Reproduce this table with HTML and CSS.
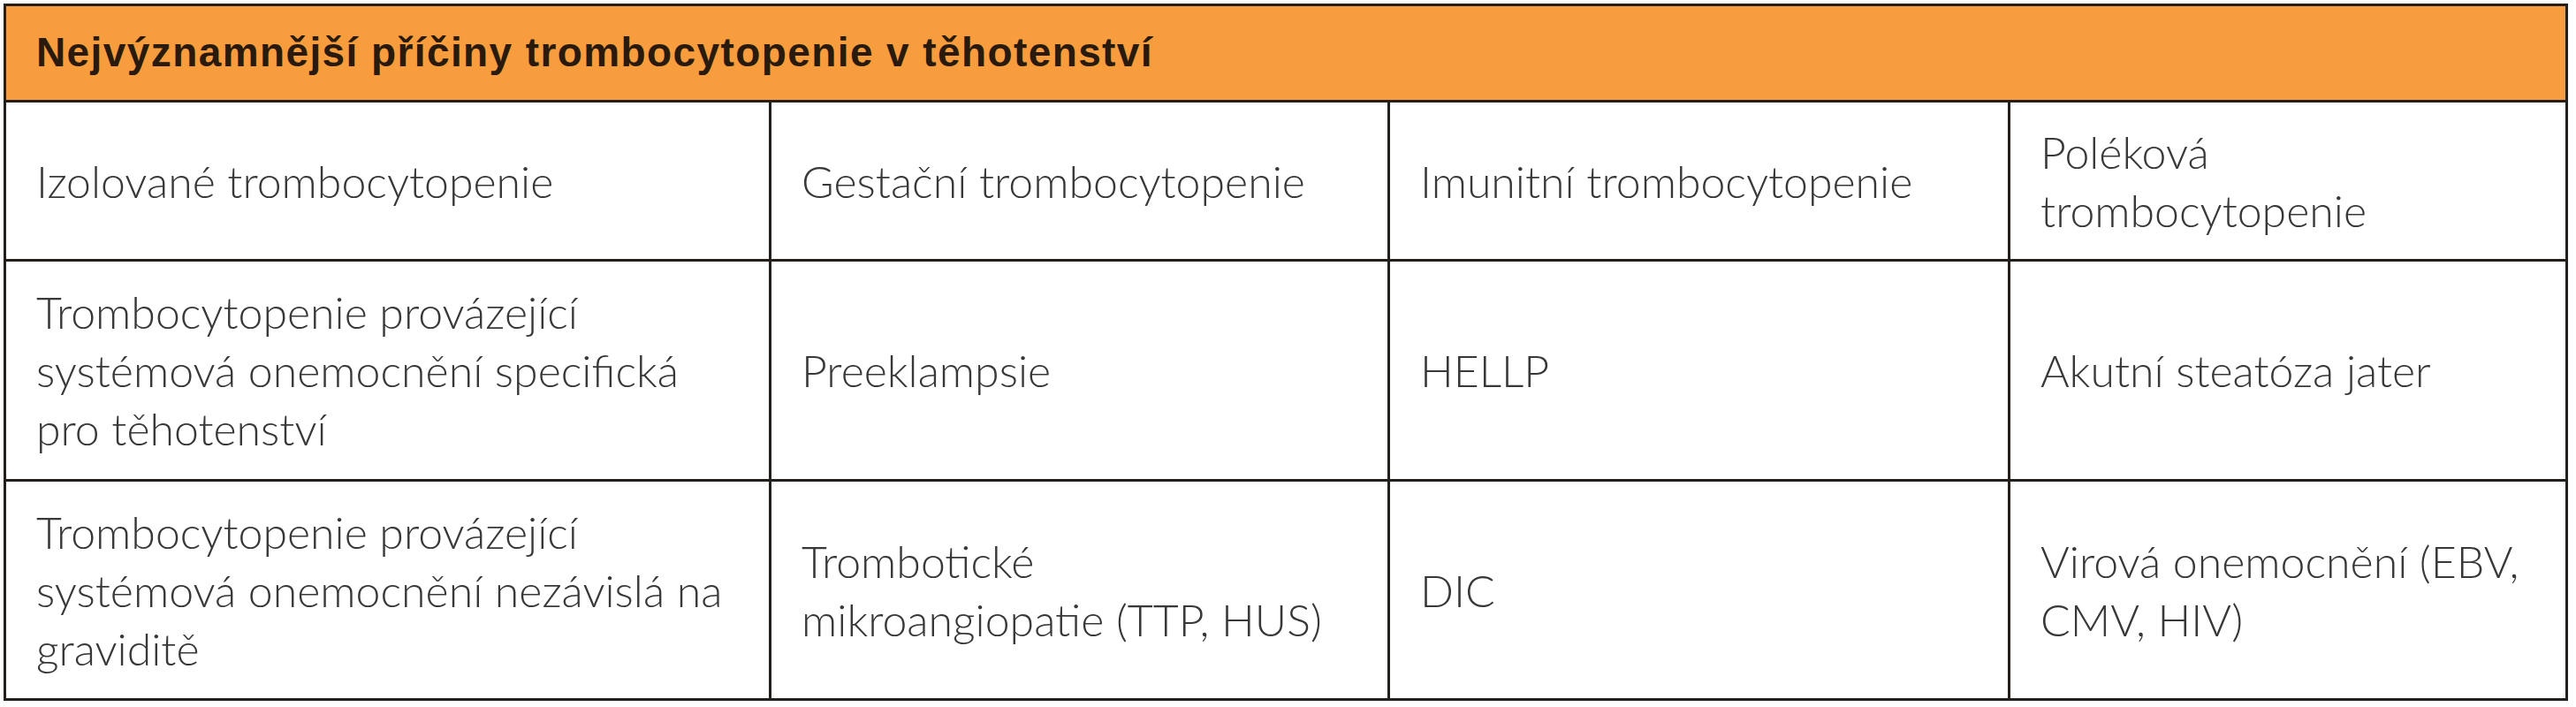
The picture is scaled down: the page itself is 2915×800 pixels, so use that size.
FILE: index.html
```html
<!DOCTYPE html>
<html lang="cs">
<head>
<meta charset="utf-8">
<title>Nejvýznamnější příčiny trombocytopenie v těhotenství</title>
<link rel="stylesheet" href="styles.css">
</head>
<body>
<div class="tbl">
  <div class="cell head">Nejvýznamnější příčiny trombocytopenie v těhotenství</div>

  <div class="cell c1"><span>Izolované trombocytopenie</span></div>
  <div class="cell c2"><span>Gestační trombocytopenie</span></div>
  <div class="cell c3"><span>Imunitní trombocytopenie</span></div>
  <div class="cell c4"><span>Poléková<br>trombocytopenie</span></div>

  <div class="cell c1"><span>Trombocytopenie provázející<br>systémová onemocnění specifická<br>pro těhotenství</span></div>
  <div class="cell c2"><span>Preeklampsie</span></div>
  <div class="cell c3"><span>HELLP</span></div>
  <div class="cell c4"><span>Akutní steatóza jater</span></div>

  <div class="cell c1"><span>Trombocytopenie provázející<br>systémová onemocnění nezávislá na<br>graviditě</span></div>
  <div class="cell c2"><span>Trombotické<br>mikroangiopatie (TTP, HUS)</span></div>
  <div class="cell c3"><span>DIC</span></div>
  <div class="cell c4"><span>Virová onemocnění (EBV,<br>CMV, HIV)</span></div>
</div>
</body>
</html>
```
FILE: styles.css
```css
html, body {
  margin: 0;
  padding: 0;
  background: #ffffff;
}

.tbl {
  margin: 4px 0 0 4px;
  width: 2902px;
  box-sizing: border-box;
  display: grid;
  grid-template-columns: 866px 700px 702px 631px;
  grid-template-rows: 109px 180px 249px 248px;
  border-top: 3px solid #231f1c;
  border-left: 3px solid #231f1c;
}

.cell {
  box-sizing: border-box;
  border-right: 3px solid #231f1c;
  border-bottom: 3px solid #231f1c;
  display: flex;
  align-items: center;
  padding: 0 30px 0 34px;
  font-family: Lato, "Liberation Sans", sans-serif;
  font-weight: 300;
  font-size: 50px;
  line-height: 66px;
  color: #383838;
  white-space: nowrap;
  overflow: hidden;
}

.head {
  grid-column: 1 / -1;
  background: #f89d3e;
  font-family: "Liberation Sans", Arial, sans-serif;
  font-weight: 700;
  font-size: 46px;
  letter-spacing: 1.4px;
  line-height: 50px;
  color: #2a1a0e;
  padding-bottom: 2px;
}
```
